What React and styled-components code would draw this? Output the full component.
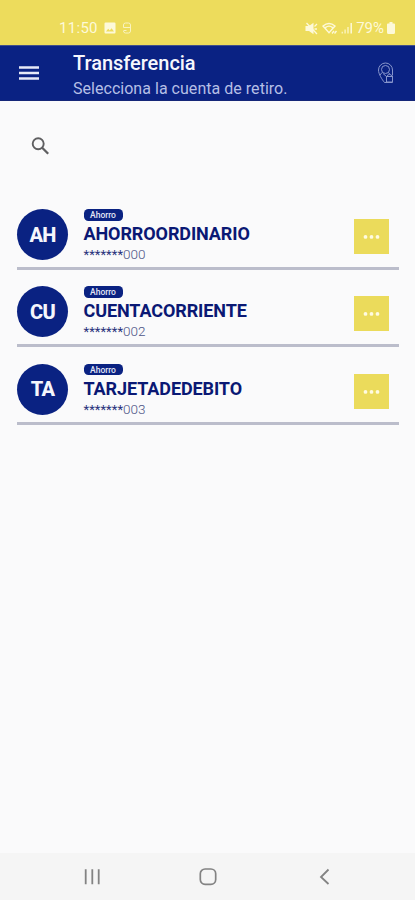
import React from "react";
import styled, { createGlobalStyle } from "styled-components";

const GlobalStyle = createGlobalStyle`
  * {
    box-sizing: border-box;
  }
  body {
    margin: 0;
    background: #fafafb;
    font-family: Roboto, "Liberation Sans", sans-serif;
  }
  button {
    display: block;
    border: 0;
    padding: 0;
    background: none;
    font: inherit;
    cursor: pointer;
  }
  svg {
    display: block;
  }
`;

const Screen = styled.div`
  display: flex;
  flex-direction: column;
  height: 100vh;
  min-height: 900px;
  background: #fafafb;
`;

const StatusBar = styled.div`
  display: flex;
  justify-content: space-between;
  height: 45px;
  padding: 18px 20px 0 59px;
  background: #eddc5c;
  color: #fdf9d9;
`;

const StatusGroup = styled.div`
  display: flex;
  align-items: center;
  height: 20px;
  gap: ${(props) => props.$gap};
`;

const StatusText = styled.span`
  font-size: 15px;
  line-height: 20px;
  letter-spacing: ${(props) => props.$spacing || "0"};
`;

const Header = styled.header`
  display: flex;
  height: 56px;
  padding: 0 20px 0 19px;
  background: #0a2283;
  border-top: 1px solid #41508a;
  border-bottom: 1px solid #152678;
`;

const MenuButton = styled.button`
  width: 20px;
  height: 54px;
  color: #e6e9f8;
`;

const Titles = styled.div`
  flex: 1;
  padding: 5px 0 0 34px;
`;

const Title = styled.h1`
  margin: 0;
  font-size: 20px;
  line-height: 25px;
  font-weight: 500;
  letter-spacing: -0.03px;
  color: #f6f7fd;
`;

const Subtitle = styled.div`
  font-size: 16px;
  line-height: 26px;
  letter-spacing: 0.03px;
  color: #b5bfe6;
`;

const LocationButton = styled.button`
  width: 18px;
  height: 54px;
  color: #8795cc;
`;

const Content = styled.main`
  flex: 1;
  padding: 36px 16px 0 17px;
`;

const SearchButton = styled.button`
  margin-left: 14px;
  color: #5f5f61;
`;

const AccountList = styled.div`
  display: flex;
  flex-direction: column;
  gap: 16.3px;
  margin-top: 54px;
`;

const AccountRow = styled.div`
  display: flex;
  height: 61px;
  border-bottom: 3px solid #bbbdcb;
`;

const Avatar = styled.div`
  display: flex;
  align-items: center;
  justify-content: center;
  width: 51px;
  height: 51px;
  border-radius: 50%;
  background: #0a2282;
  color: #f5f6fc;
  font-size: 20px;
  font-weight: 800;
  letter-spacing: -0.7px;
`;

const AccountInfo = styled.div`
  flex: 1;
  padding-left: 15.5px;
`;

const TypeBadge = styled.div`
  width: 39px;
  height: 11.5px;
  border-radius: 4.5px;
  background: #0a2282;
  color: #e3e6f6;
  font-size: 8.5px;
  font-weight: 500;
  line-height: 12px;
  text-align: center;
`;

const AccountName = styled.div`
  margin-top: 2.5px;
  font-size: 18px;
  line-height: 21px;
  font-weight: 700;
  letter-spacing: -0.1px;
  color: #0a1874;
`;

const AccountNumber = styled.div`
  font-size: 13.5px;
  line-height: 21px;
  font-weight: 300;
  color: #4d5486;
`;

const Mask = styled.span`
  font-size: 13px;
  font-weight: 400;
  letter-spacing: 0.05px;
  color: #29327c;
`;

const MoreButton = styled.button`
  display: flex;
  align-items: center;
  justify-content: center;
  width: 35px;
  height: 35px;
  margin: 10px 10px 0 0;
  background: #ebdb5b;
  color: #fffbe0;
`;

const NavBar = styled.nav`
  display: flex;
  align-items: center;
  justify-content: space-between;
  height: 47px;
  padding: 0 82px 0 83px;
  background: #f5f5f5;
  color: #838383;
`;

const accounts = [
  { initials: "AH", name: "AHORROORDINARIO", digits: "000" },
  { initials: "CU", name: "CUENTACORRIENTE", digits: "002" },
  { initials: "TA", name: "TARJETADEDEBITO", digits: "003" },
];

const ImageIcon = () => (
  <svg width="12" height="12" viewBox="0 0 12 12">
    <path
      fill="currentColor"
      fillRule="evenodd"
      d="M1.5 0.5h9a1 1 0 0 1 1 1v9a1 1 0 0 1-1 1h-9a1 1 0 0 1-1-1v-9a1 1 0 0 1 1-1zM2 9.5h8L7.6 6.2 5.7 8.4 4.2 6.8z"
    />
  </svg>
);

const CardIcon = () => (
  <svg width="10" height="12" viewBox="0 0 10 12" fill="none" stroke="currentColor" opacity="0.8">
    <path d="M1.5 3q0-2 2-2h3q2 0 2 2v6q0 2-2 2h-3q-2 0-2-2M1.5 5.5h7M1.5 3v2.5M1.5 8.5h3" />
  </svg>
);

const MuteIcon = () => (
  <svg width="14" height="13" viewBox="0 0 14 13">
    <path fill="currentColor" d="M0.5 4h3.5L8.500 0.800v11.400L4 9H.5z" />
    <path stroke="currentColor" strokeWidth="1.3" fill="none" d="M1.5 1l10.5 11M9.5 4.5L12 2M9.5 7H12" />
  </svg>
);

const WifiIcon = () => (
  <svg width="16" height="13" viewBox="0 0 16 13" fill="none" stroke="currentColor" strokeWidth="1.4">
    <path d="M1 4q6-5 12 0L7 10.8zM3.4 5.6q3.6-3 7.2 0" />
    <path d="M10 11.5l2-2.5M12.5 11.5l2-2.5" />
  </svg>
);

const SignalIcon = () => (
  <svg width="12" height="12" viewBox="0 0 12 12" fill="none" stroke="currentColor" strokeWidth="1.5">
    <path d="M1.3 11.5V9.7M4.1 11.5V7.5M7 11.5V5" opacity="0.75" />
    <path d="M10.2 11.5V1" />
  </svg>
);

const BatteryIcon = () => (
  <svg width="8" height="12" viewBox="0 0 8 12" fill="currentColor">
    <path d="M2.5 0h3v1.5H7a1 1 0 0 1 1 1v8a1.5 1.5 0 0 1-1.5 1.5h-5A1.5 1.5 0 0 1 0 10.5v-8a1 1 0 0 1 1-1h1.5z" />
  </svg>
);

const MenuIcon = () => (
  <svg width="20" height="14" viewBox="0 0 20 14" stroke="currentColor" strokeWidth="2.3">
    <path d="M0 1.5h20M0 7h20M0 12.5h20" />
  </svg>
);

const LocationIcon = () => (
  <svg width="18" height="22" viewBox="0 0 18 22" fill="none" stroke="currentColor" strokeWidth="1">
    <path d="M7.5 20.500C5 17.500 1.500 12 1.500 8a7 7 0 0 1 14 0v5.500" />
    <circle cx="8.500" cy="7.500" r="4" />
    <path d="M5 10.500L3 13M6 11.500l3.500 3M11.500 10.500l1.500 2" />
    <rect x="9.500" y="14.500" width="6" height="5.500" />
    <path d="M7.500 20.500h8M10.500 14.500v-1.300q2-1.700 4 0v1.300" />
  </svg>
);

const SearchIcon = () => (
  <svg width="19" height="18" viewBox="0 0 19 18" fill="none" stroke="currentColor">
    <circle cx="7.2" cy="6.7" r="5.5" strokeWidth="1.9" />
    <path d="M11.2 10.7l6 6" strokeWidth="2.3" />
  </svg>
);

const DotsIcon = () => (
  <svg width="17" height="5" viewBox="0 0 17 5" fill="currentColor">
    <circle cx="2.5" cy="2.9" r="1.9" />
    <circle cx="8.5" cy="2.9" r="1.9" />
    <circle cx="14.5" cy="2.9" r="1.9" />
  </svg>
);

const RecentsIcon = () => (
  <svg width="18" height="18" viewBox="0 0 18 18" stroke="currentColor" strokeWidth="1.8">
    <path d="M2.7 1.3v15M9.3 1.3v15M15.7 1.3v15" />
  </svg>
);

const HomeIcon = () => (
  <svg width="18" height="18" viewBox="0 0 18 18" fill="none" stroke="currentColor" strokeWidth="1.7">
    <rect x="1.3" y="1" width="15.4" height="15.4" rx="4.8" />
  </svg>
);

const BackIcon = () => (
  <svg width="18" height="18" viewBox="0 0 18 18" fill="none" stroke="currentColor" strokeWidth="1.8">
    <path d="M13.5 1.5L6 9l7.5 7" />
  </svg>
);

const Account = ({ initials, name, digits }) => {
  return (
    <AccountRow>
      <Avatar>{initials}</Avatar>
      <AccountInfo>
        <TypeBadge>Ahorro</TypeBadge>
        <AccountName>{name}</AccountName>
        <AccountNumber>
          <Mask>*******</Mask>
          {digits}
        </AccountNumber>
      </AccountInfo>
      <MoreButton aria-label="Opciones">
        <DotsIcon />
      </MoreButton>
    </AccountRow>
  );
};

const App = () => {
  return (
    <>
      <GlobalStyle />
      <Screen>
        <StatusBar>
          <StatusGroup $gap="6px">
            <StatusText $spacing="0.3px">11:50</StatusText>
            <ImageIcon />
            <CardIcon />
          </StatusGroup>
          <StatusGroup $gap="3px">
            <MuteIcon />
            <WifiIcon />
            <SignalIcon />
            <StatusText>79%</StatusText>
            <BatteryIcon />
          </StatusGroup>
        </StatusBar>
        <Header>
          <MenuButton aria-label="Menú">
            <MenuIcon />
          </MenuButton>
          <Titles>
            <Title>Transferencia</Title>
            <Subtitle>Selecciona la cuenta de retiro.</Subtitle>
          </Titles>
          <LocationButton aria-label="Ubicación">
            <LocationIcon />
          </LocationButton>
        </Header>
        <Content>
          <SearchButton aria-label="Buscar">
            <SearchIcon />
          </SearchButton>
          <AccountList>
            {accounts.map((account) => (
              <Account key={account.initials} {...account} />
            ))}
          </AccountList>
        </Content>
        <NavBar>
          <RecentsIcon />
          <HomeIcon />
          <BackIcon />
        </NavBar>
      </Screen>
    </>
  );
};

export default App;
